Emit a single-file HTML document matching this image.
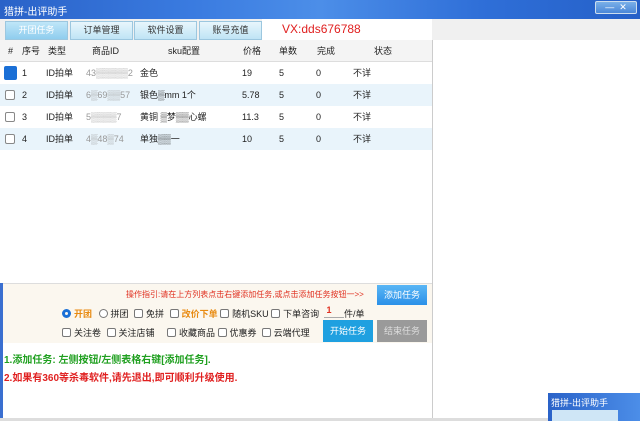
<!DOCTYPE html>
<html><head><meta charset="utf-8"><style>
*{margin:0;padding:0;box-sizing:border-box}
body{width:640px;height:421px;overflow:hidden;background:#fff;font-family:"Liberation Sans","Noto Sans CJK SC",sans-serif;font-size:9px;position:relative}
.abs{position:absolute}
#title{left:0;top:0;width:640px;height:19px;background:linear-gradient(90deg,#2a62c8,#3a7be0 30%,#4c8ee8 50%,#2f6fd8 75%,#2560c8);color:#fff;font-size:10px;padding:3px 4px}
#tabs{left:0;top:19px;width:640px;height:21px;background:#f0f0f0}
.tab{position:absolute;top:2px;height:19px;width:63px;background:linear-gradient(#e8f6fc,#bfe4f5);border:1px solid #9cc7df;color:#333;text-align:center;line-height:17px;font-size:9px}
#vx{left:262px;top:19px;width:170px;height:21px;background:#fff;color:#e02020;font-size:12px;padding:3px 20px}
#hdr{left:0;top:40px;width:432px;height:22px;background:#f4f4f4;border-bottom:1px solid #ddd}
.r{position:absolute;left:0;width:432px;height:22px}
.c{position:absolute;top:0;line-height:22px;font-size:9px;color:#222}
.cb{position:absolute;left:5px;top:6px;width:10px;height:10px;border:1px solid #888;border-radius:2px;background:#fff}
#right{left:432px;top:40px;width:208px;height:378px;background:#fff;border-left:1px solid #ccc}
#panel{left:3px;top:283px;width:429px;height:60px;background:#fbf7ef;border-top:1px solid #ddd}
#btm{left:0;top:418px;width:640px;height:3px;background:#ddd}
.btn{position:absolute;color:#fff;font-size:9px;text-align:center;line-height:20px}
.opt{position:absolute;font-size:9px;color:#222;white-space:nowrap}
.box{display:inline-block;width:9px;height:9px;border:1px solid #777;border-radius:2px;vertical-align:-1px;margin-right:3px;background:#fff}
</style></head><body>
<div class="abs" id="title">猎拼-出评助手</div>
<div class="abs" style="left:595px;top:1px;width:42px;height:13px;background:linear-gradient(#7ab0e8,#4a86d8);border:1px solid #cde;border-radius:2px;color:#fff;font-size:9px;line-height:11px;text-align:center">—&nbsp;&nbsp;✕</div>
<div class="abs" id="tabs"></div>
<div class="tab abs" style="left:5px;top:21px;color:#fff;background:linear-gradient(#bfe6f8,#8fcdee)">开团任务</div>
<div class="tab abs" style="left:70px;top:21px">订单管理</div>
<div class="tab abs" style="left:134px;top:21px">软件设置</div>
<div class="tab abs" style="left:199px;top:21px">账号充值</div>
<div class="abs" id="vx">VX:dds676788</div>
<div class="abs" style="left:0;top:283px;width:3px;height:135px;background:#3a6fd0"></div>
<div class="abs" id="hdr">
<span class="c" style="left:8px">#</span><span class="c" style="left:22px">序号</span><span class="c" style="left:48px">类型</span><span class="c" style="left:92px">商品ID</span><span class="c" style="left:168px">sku配置</span><span class="c" style="left:243px">价格</span><span class="c" style="left:279px">单数</span><span class="c" style="left:317px">完成</span><span class="c" style="left:374px">状态</span>
</div>
<div class="r" style="top:62px;background:#fff"><div class="cb" style="left:4px;top:4px;width:13px;height:14px;background:#1a6fd6;border-color:#1a6fd6"></div><span class="c" style="left:22px">1</span><span class="c" style="left:46px">ID拍单</span><span class="c" style="left:86px;color:#999">43▒▒▒▒▒2</span><span class="c" style="left:140px">金色</span><span class="c" style="left:242px">19</span><span class="c" style="left:279px">5</span><span class="c" style="left:316px">0</span><span class="c" style="left:353px">不详</span></div>
<div class="r" style="top:84px;background:#e9f4fb"><div class="cb"></div><span class="c" style="left:22px">2</span><span class="c" style="left:46px">ID拍单</span><span class="c" style="left:86px;color:#999">6▒69▒▒57</span><span class="c" style="left:140px">银色▒mm 1个</span><span class="c" style="left:242px">5.78</span><span class="c" style="left:279px">5</span><span class="c" style="left:316px">0</span><span class="c" style="left:353px">不详</span></div>
<div class="r" style="top:106px;background:#fff"><div class="cb"></div><span class="c" style="left:22px">3</span><span class="c" style="left:46px">ID拍单</span><span class="c" style="left:86px;color:#999">5▒▒▒▒7</span><span class="c" style="left:140px">黄铜 ▒梦▒▒心螺</span><span class="c" style="left:242px">11.3</span><span class="c" style="left:279px">5</span><span class="c" style="left:316px">0</span><span class="c" style="left:353px">不详</span></div>
<div class="r" style="top:128px;background:#e9f4fb"><div class="cb"></div><span class="c" style="left:22px">4</span><span class="c" style="left:46px">ID拍单</span><span class="c" style="left:86px;color:#999">4▒48▒74</span><span class="c" style="left:140px">单独▒▒一</span><span class="c" style="left:242px">10</span><span class="c" style="left:279px">5</span><span class="c" style="left:316px">0</span><span class="c" style="left:353px">不详</span></div>
<div class="abs" id="right"></div>
<div class="abs" id="panel"></div>
<div class="opt" style="left:126px;top:289px;color:#e03020;font-size:8px">操作指引:请在上方列表点击右键添加任务,或点击添加任务按钮一&gt;&gt;</div>
<div class="btn" style="left:377px;top:285px;width:50px;height:20px;background:linear-gradient(#5ab6f5,#2a90e8)">添加任务</div>
<div class="opt" style="left:62px;top:307px"><span style="display:inline-block;width:9px;height:9px;border:3px solid #1a6fd6;border-radius:50%;vertical-align:-1px;margin-right:3px"></span><b style="color:#e88a10">开团</b> <span class="box" style="border-radius:50%;margin-left:4px"></span>拼团 <span class="box" style="margin-left:3px"></span>免拼 <span class="box" style="margin-left:3px"></span><b style="color:#e88a10">改价下单</b> <span class="box"></span>随机SKU <span class="box"></span>下单咨询</div>
<div class="opt" style="left:324px;top:305px;width:20px;height:13px;border-bottom:1px solid #aaa;color:#e03020;font-weight:bold">&nbsp;1</div>
<div class="opt" style="left:344px;top:307px">件/单</div>
<div class="opt" style="left:62px;top:326px"><span class="box"></span>关注卷 <span class="box" style="margin-left:3px"></span>关注店铺 &nbsp;&nbsp;&nbsp;&nbsp;<span class="box"></span>收藏商品 <span class="box"></span>优惠券 &nbsp;<span class="box"></span>云端代理</div>
<div class="btn" style="left:323px;top:320px;width:50px;height:22px;line-height:22px;background:#1fa0e0">开始任务</div>
<div class="btn" style="left:377px;top:320px;width:50px;height:22px;line-height:22px;background:#9a9a9a;color:#ddd">结束任务</div>
<div class="opt" style="left:4px;top:351px;color:#20a020;font-weight:bold;font-size:10px">1.添加任务: 左侧按钮/左侧表格右键[添加任务].</div>
<div class="opt" style="left:4px;top:369px;color:#e02020;font-weight:bold;font-size:10px">2.如果有360等杀毒软件,请先退出,即可顺利升级使用.</div>
<div class="abs" id="btm"></div>
<div class="abs" style="left:548px;top:393px;width:92px;height:28px;background:linear-gradient(90deg,#2a62c8,#4c8ee8);color:#fff;font-size:9px;padding:3px 3px">猎拼-出评助手<div style="position:absolute;left:4px;top:17px;width:66px;height:11px;background:#cfe6f6"></div></div>
</body></html>
